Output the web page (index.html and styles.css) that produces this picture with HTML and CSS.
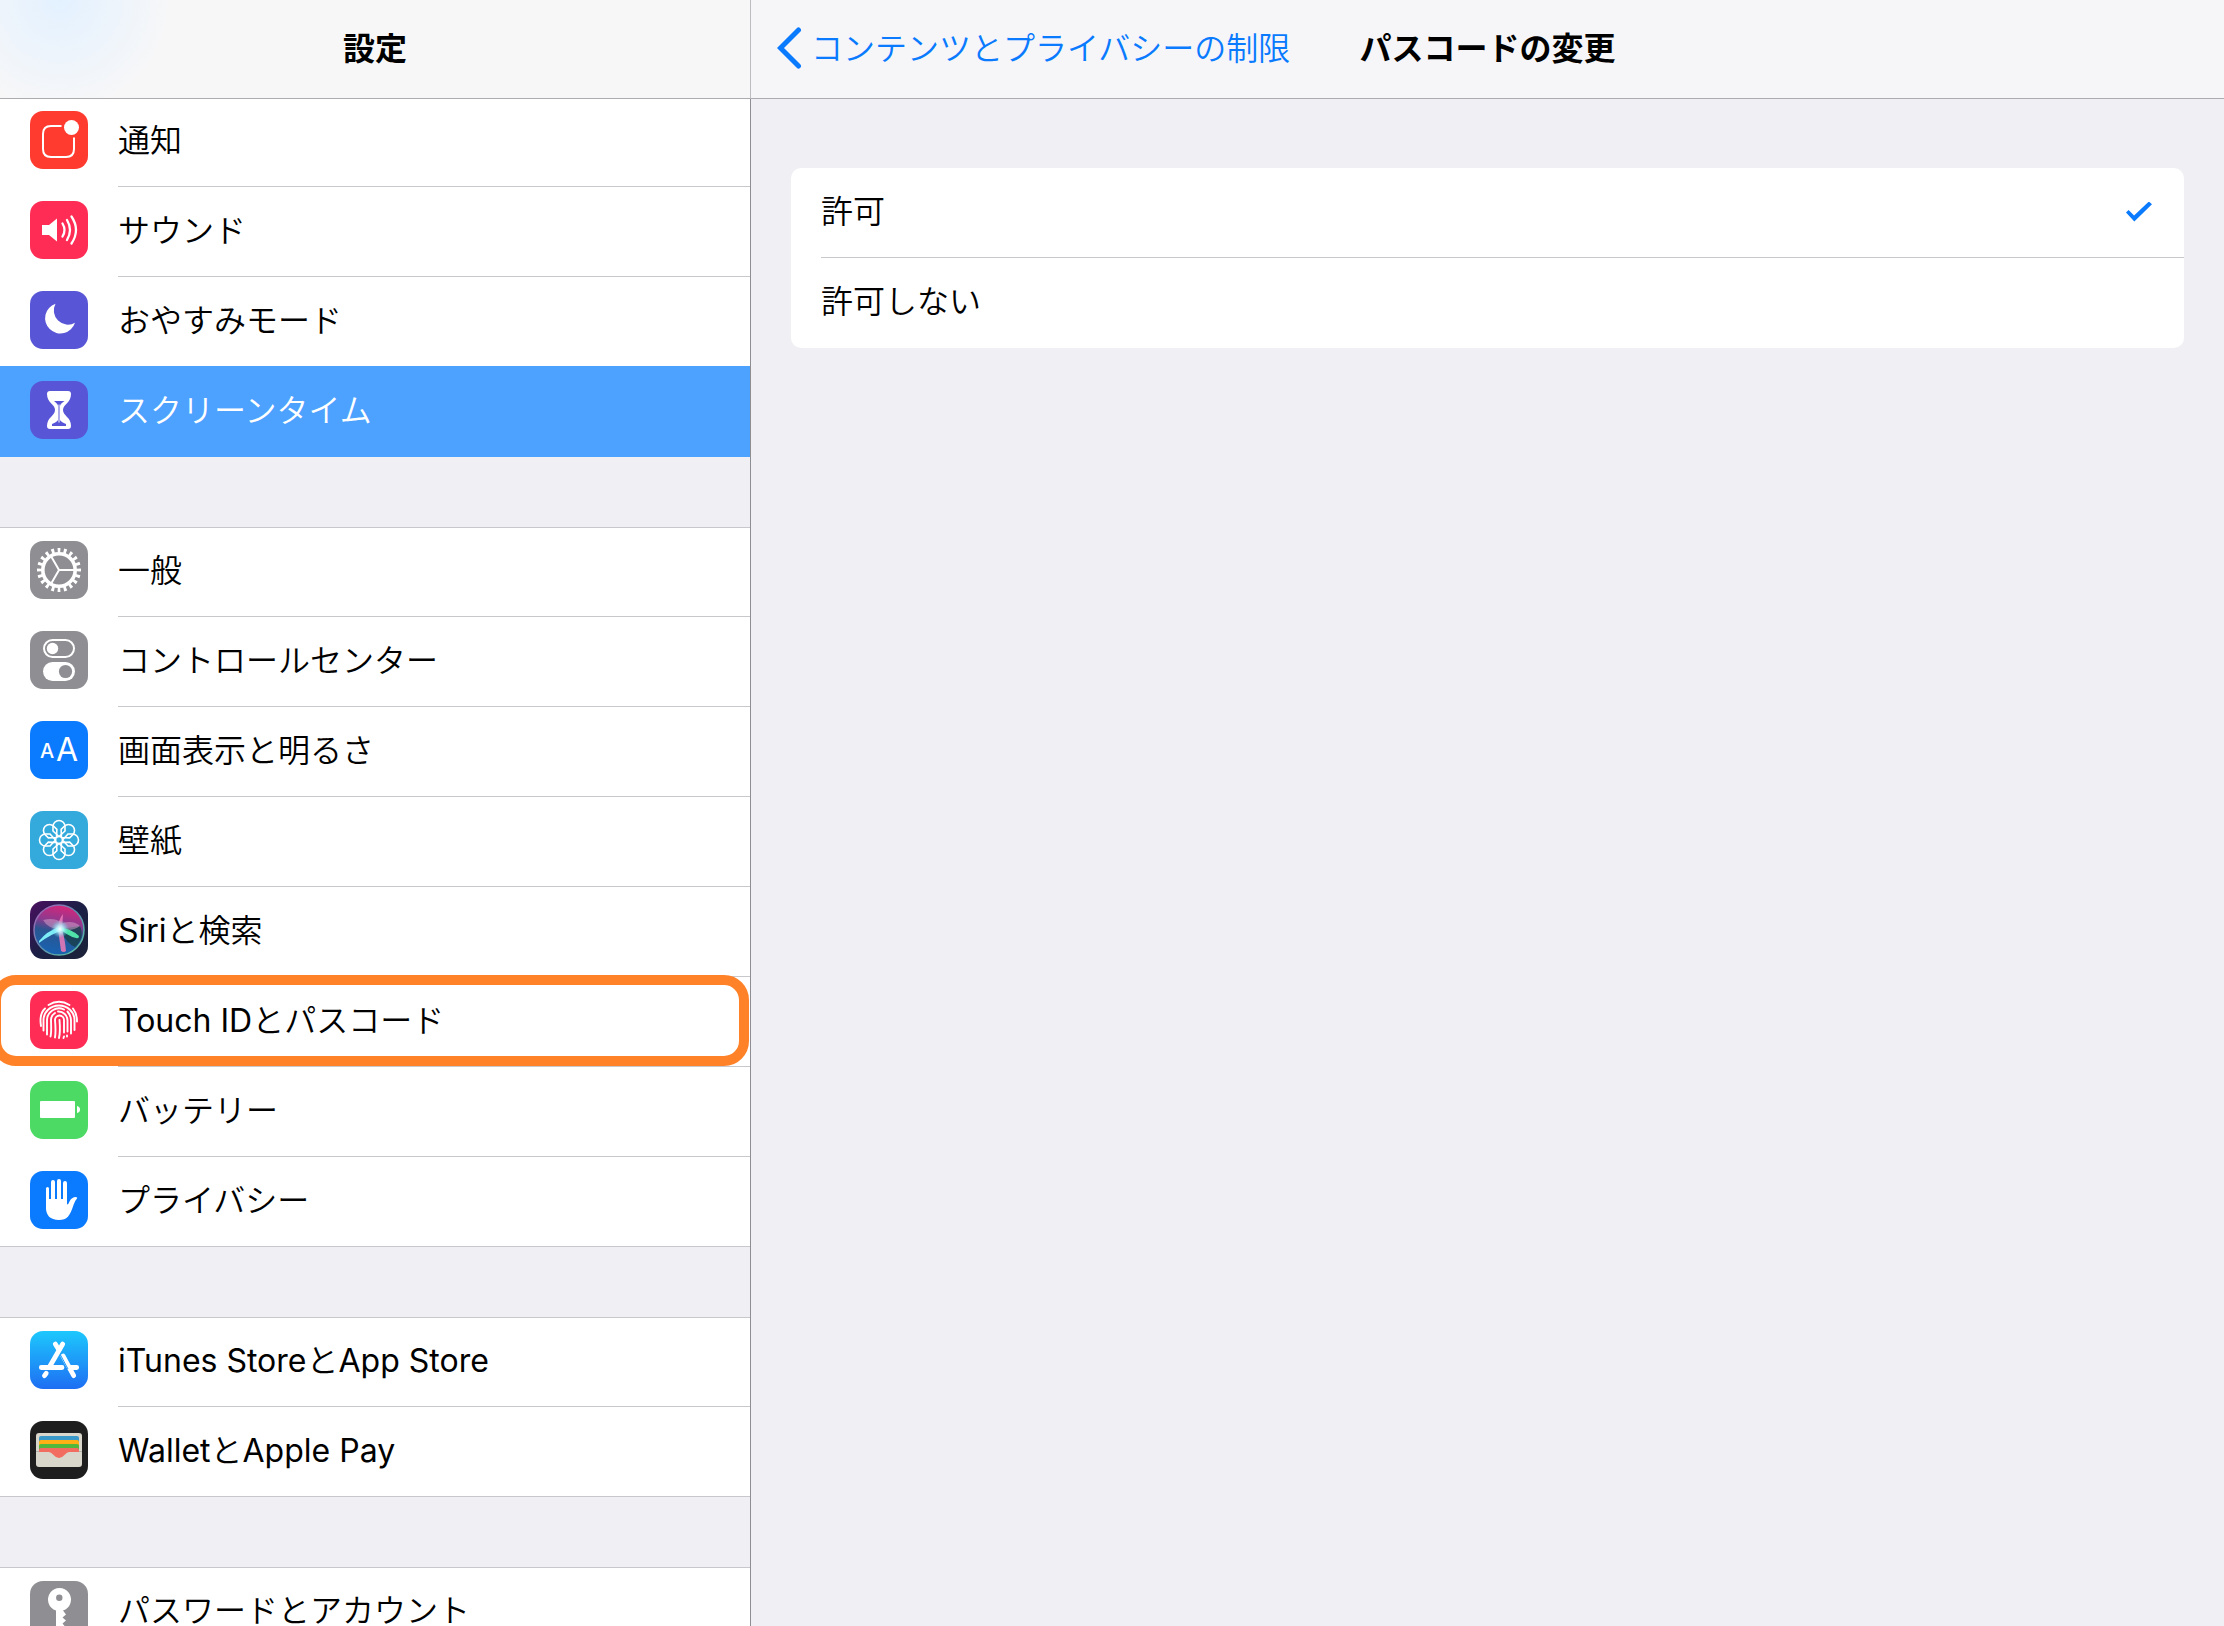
FILE: index.html
```
<!DOCTYPE html>
<html lang="ja">
<head>
    <meta charset="UTF-8">
    <meta name="viewport" content="width=device-width, initial-scale=1.0">
    <title>設定</title>
    <link rel="stylesheet" href="styles.css">
</head>
<body>

<div class="settings">
    <aside class="sidebar">
        <header class="bar sidebar-bar">
            <h1>設定</h1>
        </header>

        <nav class="menu">
            <ul class="group">
                <li><a class="item" href="#notifications">
                    <svg class="icon red" viewBox="0 0 58 58" aria-hidden="true">
                        <path d="M31.5 15H21q-8 0-8 8v15q0 8 8 8h15q8 0 8-8V26.500" fill="none" stroke="#fff" stroke-width="2"/>
                        <circle cx="41.500" cy="16.500" r="7.500" fill="#fff"/>
                    </svg>
                    <span class="label">通知</span>
                </a></li>
                <li><a class="item" href="#sound">
                    <svg class="icon pink" viewBox="0 0 58 58" aria-hidden="true">
                        <path d="M12 24h7l8-6.500v23L19 34h-7z" fill="#fff"/>
                        <g fill="none" stroke="#fff" stroke-width="2.300" stroke-linecap="round">
                            <path d="M32.500 22.500q4 6.500 0 13"/>
                            <path d="M37 19q6 10 0 20"/>
                            <path d="M41.500 15.500q9 13.500 0 27"/>
                        </g>
                    </svg>
                    <span class="label">サウンド</span>
                </a></li>
                <li><a class="item" href="#dnd">
                    <svg class="icon purple" viewBox="0 0 58 58" aria-hidden="true">
                        <path d="M25.500 12.700A15.300 15.300 0 1 0 45 31.800A14.200 14.200 0 0 1 25.500 12.700z" fill="#fff"/>
                    </svg>
                    <span class="label">おやすみモード</span>
                </a></li>
                <li><a class="item selected" href="#screentime" aria-current="page">
                    <svg class="icon purple" viewBox="0 0 58 58" aria-hidden="true">
                        <path d="M20 10h18q3 0 3 3c0 9-8 10-8 16s8 7 8 16q0 3-3 3H20q-3 0-3-3c0-9 8-10 8-16s-8-7-8-16q0-3 3-3z" fill="#fff"/>
                        <path d="M24 20h10.500q-4.500 3-4.500 5v14q1 2 6 4v2H22v-2q5-2 6-4V25q0-2-4-5z" fill="#5856d6"/>
                        <path d="M29 23.500v18" stroke="#fff" stroke-width="1"/>
                    </svg>
                    <span class="label">スクリーンタイム</span>
                </a></li>
            </ul>

            <ul class="group">
                <li><a class="item" href="#general">
                    <svg class="icon gray" viewBox="0 0 58 58" aria-hidden="true">
                        <g fill="none" stroke="#fff">
                            <circle cx="29" cy="29" r="16.200" stroke-width="3.600"/>
                            <circle cx="29" cy="29" r="19.600" stroke-width="4.800" pathLength="40" stroke-dasharray="0.9 1.1" stroke-dashoffset="0.45"/>
                            <path d="M29 29h15M29 29l-7.500-13M29 29l-7.500 13" stroke-width="2"/>
                        </g>
                    </svg>
                    <span class="label">一般</span>
                </a></li>
                <li><a class="item" href="#control-center">
                    <svg class="icon gray" viewBox="0 0 58 58" aria-hidden="true">
                        <rect x="14" y="9" width="30" height="17" rx="8.500" fill="none" stroke="#fff" stroke-width="2"/>
                        <circle cx="22.500" cy="17.500" r="5.700" fill="#fff"/>
                        <rect x="13" y="31" width="32" height="19" rx="9.500" fill="#fff"/>
                        <circle cx="35.500" cy="40.500" r="6.600" fill="#8e8e93"/>
                    </svg>
                    <span class="label">コントロールセンター</span>
                </a></li>
                <li><a class="item" href="#display">
                    <svg class="icon blue" viewBox="0 0 58 58" aria-hidden="true">
                        <text x="10" y="37" class="glyph-small">A</text>
                        <text x="26" y="40" class="glyph-large">A</text>
                    </svg>
                    <span class="label">画面表示と明るさ</span>
                </a></li>
                <li><a class="item" href="#wallpaper">
                    <svg class="icon sky" viewBox="0 0 58 58" aria-hidden="true">
                        <defs>
                            <path id="petal" d="M29 25.500L23 20v-4.500a6 6 0 0 1 12 0V20z"/>
                        </defs>
                        <g fill="none" stroke="#fff" stroke-width="1.600">
                            <use href="#petal"/>
                            <use href="#petal" transform="rotate(45 29 29)"/>
                            <use href="#petal" transform="rotate(90 29 29)"/>
                            <use href="#petal" transform="rotate(135 29 29)"/>
                            <use href="#petal" transform="rotate(180 29 29)"/>
                            <use href="#petal" transform="rotate(225 29 29)"/>
                            <use href="#petal" transform="rotate(270 29 29)"/>
                            <use href="#petal" transform="rotate(315 29 29)"/>
                            <circle cx="29" cy="29" r="3.500"/>
                        </g>
                    </svg>
                    <span class="label">壁紙</span>
                </a></li>
                <li><a class="item" href="#siri">
                    <svg class="icon" viewBox="0 0 58 58" aria-hidden="true">
                        <defs>
                            <linearGradient id="siri-bg" x1="0" y1="0" x2="1" y2="1">
                                <stop offset="0" stop-color="#4a1060"/>
                                <stop offset="0.5" stop-color="#1c1f45"/>
                                <stop offset="1" stop-color="#1b2338"/>
                            </linearGradient>
                            <linearGradient id="siri-orb" x1="0.6" y1="0" x2="0.4" y2="1">
                                <stop offset="0" stop-color="#d8267a"/>
                                <stop offset="0.35" stop-color="#8b3a8f"/>
                                <stop offset="0.55" stop-color="#2a5590"/>
                                <stop offset="1" stop-color="#1763b4"/>
                            </linearGradient>
                            <linearGradient id="siri-ring" x1="0" y1="0" x2="1" y2="1">
                                <stop offset="0" stop-color="#b05ab8"/>
                                <stop offset="0.5" stop-color="#5d8fb0"/>
                                <stop offset="1" stop-color="#59c9a4"/>
                            </linearGradient>
                            <radialGradient id="siri-glow">
                                <stop offset="0" stop-color="#fff"/>
                                <stop offset="0.4" stop-color="#b8f6ff" stop-opacity="0.8"/>
                                <stop offset="1" stop-color="#5ed2ee" stop-opacity="0"/>
                            </radialGradient>
                        </defs>
                        <rect width="58" height="58" fill="url(#siri-bg)"/>
                        <circle cx="29" cy="29" r="25" fill="url(#siri-orb)" stroke="url(#siri-ring)" stroke-width="1.500"/>
                        <path d="M30 28l20-3q5 12-5 21-8-3-15-18z" fill="#173f4a" opacity="0.8"/>
                        <path d="M13 19q12-3 19 3 12-3 18 3-8 6-20 3-12 0-17-9z" fill="#d9a5cc" opacity="0.5"/>
                        <path d="M33 13q-5 6-5 15l3 22q3 2 5 0-1-12-4-21z" fill="#f07ab8" opacity="0.85"/>
                        <path d="M9 40q8-10 20-14l4 3q-12 4-24 13z" fill="#7cecf7"/>
                        <path d="M28 26q14 2 21 9 0 3-3 2-9-2-18-11z" fill="#4fe3a9"/>
                        <circle cx="30" cy="28" r="9" fill="url(#siri-glow)"/>
                    </svg>
                    <span class="label"><span class="latin">Siri</span>と検索</span>
                </a></li>
                <li><a class="item highlight" href="#touchid">
                    <svg class="icon pink" viewBox="0 0 58 58" aria-hidden="true">
                        <g fill="none" stroke="#fff" stroke-width="1.900" stroke-linecap="round">
                            <path d="M18.500 14Q29 7.500 39.500 14"/>
                            <path d="M11 35Q9 23 15 17.500"/>
                            <path d="M43 17.500q4 5 4 13"/>
                            <path d="M13.500 39.500V29a15.500 14.500 0 0 1 31 0v10"/>
                            <path d="M17 43.500V29a12 12 0 0 1 17-10.500M37.500 20.500q3.500 4 3.500 9v13"/>
                            <path d="M20.500 45.500q1-3 .500-16.500a8.500 8.500 0 0 1 4-7M28 20.500a9 9 0 0 1 9.500 9v11M37 44.500v1"/>
                            <path d="M25 46.500q1-6 0-17.500a4.500 4.500 0 0 1 9 0v12.500M34 45.500l-.500 1.500"/>
                            <path d="M29.500 29q1 12-.500 18"/>
                        </g>
                    </svg>
                    <span class="label"><span class="latin">Touch ID</span>とパスコード</span>
                </a></li>
                <li><a class="item" href="#battery">
                    <svg class="icon green" viewBox="0 0 58 58" aria-hidden="true">
                        <rect x="10" y="20" width="35" height="17" rx="1" fill="#fff"/>
                        <path d="M47 25q3 .500 3 3.500t-3 3.500z" fill="#fff"/>
                    </svg>
                    <span class="label">バッテリー</span>
                </a></li>
                <li><a class="item" href="#privacy">
                    <svg class="icon blue" viewBox="0 0 58 58" aria-hidden="true">
                        <path d="M23 11v20M29 10v20M35 12v20" stroke="#fff" stroke-width="4" stroke-linecap="round"/>
                        <path d="M17.500 17.500v20" stroke="#fff" stroke-width="3" stroke-linecap="round"/>
                        <path d="M16 28h21v5.500q1.500 0 2.500-3 2-4.500 6.500-4.500 2 .500 1 1.500-2 2-3.500 6.500C40 45 37 49 29 49c-9 0-13-5-13-12z" fill="#fff"/>
                    </svg>
                    <span class="label">プライバシー</span>
                </a></li>
            </ul>

            <ul class="group">
                <li><a class="item" href="#store">
                    <svg class="icon" viewBox="0 0 58 58" aria-hidden="true">
                        <defs>
                            <linearGradient id="store-bg" x1="0" y1="0" x2="0" y2="1">
                                <stop offset="0" stop-color="#1dc8fd"/>
                                <stop offset="1" stop-color="#1e6ef3"/>
                            </linearGradient>
                        </defs>
                        <rect width="58" height="58" fill="url(#store-bg)"/>
                        <g fill="none" stroke="#fff" stroke-width="4.800" stroke-linecap="round">
                            <path d="M32.700 13L20 35M16.200 42.300l-1.700 2.400"/>
                            <path d="M25.300 13l3.700 6M33 25l10.700 19.700"/>
                            <path d="M11.300 36.500H32M41 36.500h5.700"/>
                        </g>
                        <path d="M30.500 24l7.500 14" stroke="#1f98f9" stroke-width="1"/>
                    </svg>
                    <span class="label"><span class="latin">iTunes Store</span>と<span class="latin">App Store</span></span>
                </a></li>
                <li><a class="item" href="#wallet">
                    <svg class="icon black" viewBox="0 0 58 58" aria-hidden="true">
                        <rect x="6" y="12" width="46" height="34" rx="3" fill="#d9d7cb"/>
                        <path d="M9 31V17q0-2 2-2h36q2 0 2 2v14z" fill="#3b99c9"/>
                        <path d="M9 31V21q0-2 2-2h36q2 0 2 2v10z" fill="#ffb014"/>
                        <path d="M9 31v-6q0-2 2-2h36q2 0 2 2v6z" fill="#51b83b"/>
                        <path d="M9 31v-2q0-2 2-2h36q2 0 2 2v2H39q-2 0-4 2.500-3 3.500-6 3.500t-6-3.500Q21 31 19 31z" fill="#f26d5f"/>
                        <path d="M6 30.500h3M49 30.500h3" stroke="#b5b3a8"/>
                    </svg>
                    <span class="label"><span class="latin">Wallet</span>と<span class="latin">Apple Pay</span></span>
                </a></li>
            </ul>

            <ul class="group">
                <li><a class="item" href="#accounts">
                    <svg class="icon gray" viewBox="0 0 58 58" aria-hidden="true">
                        <path d="M26 29.500a11.500 11.500 0 1 1 7 0l3 4-3.500 3 3.500 3-3.500 3 2.500 3-5.500 5.500-3.500-3.500z" fill="#fff"/>
                        <circle cx="29.300" cy="16.700" r="3.200" fill="#8e8e93"/>
                    </svg>
                    <span class="label">パスワードとアカウント</span>
                </a></li>
            </ul>
        </nav>
    </aside>

    <main class="detail">
        <header class="bar detail-bar">
            <a class="back" href="#restrictions">
                <svg class="chevron" viewBox="0 0 26 42" aria-hidden="true">
                    <path d="M21.500 3L3.500 21l18 18" fill="none" stroke="currentColor" stroke-width="5" stroke-linecap="round"/>
                </svg>
                <span>コンテンツとプライバシーの制限</span>
            </a>
            <h2>パスコードの変更</h2>
        </header>

        <form class="options">
            <label class="option">
                <span>許可</span>
                <input type="radio" name="passcode" value="allow" checked>
            </label>
            <label class="option">
                <span>許可しない</span>
                <input type="radio" name="passcode" value="deny">
            </label>
        </form>
    </main>
</div>

</body>
</html>
```

FILE: styles.css
```
* {
    box-sizing: border-box;
}

body {
    margin: 0;
    font-family: "Noto Sans CJK JP", sans-serif;
    font-size: 32px;
    font-weight: 350;
    line-height: 48px;
    color: #000;
    background-color: #efeff4;
}

a {
    color: inherit;
    text-decoration: none;
}

h1, h2 {
    margin: 0;
    font-size: 32px;
    line-height: 48px;
    font-weight: 700;
}

.settings {
    display: grid;
    grid-template-columns: minmax(320px, 751px) 1fr;
    height: 100vh;
    overflow: hidden;
}

/* Top bars */
.bar {
    min-height: 99px;
    padding-bottom: 6px;
    background-color: #f7f7f8;
    border-bottom: 1px solid #acacb0;
}

.sidebar-bar {
    display: flex;
    align-items: center;
    justify-content: center;
    position: relative;
    z-index: 2;
    border-right: 1px solid #bcbcc1;
    background-image: radial-gradient(circle at 60px 0, #e3f1ff, #f7f7f8 110px);
}

.detail-bar {
    display: grid;
    grid-template-columns: 1fr auto 1fr;
    align-items: center;
    background-color: #f6f6f8;
}

.back {
    display: flex;
    align-items: center;
    gap: 8px;
    padding-left: 26px;
    color: #0a7aff;
    white-space: nowrap;
}

.chevron {
    width: 26px;
    height: 42px;
    margin-top: 4px;
}

/* Sidebar */
.sidebar {
    display: flex;
    flex-direction: column;
    min-height: 0;
}

.menu {
    flex: 1;
    min-height: 0;
    margin-top: -2px; /* list is scrolled under the bar */
    overflow: hidden;
    border-right: 1px solid #8e8e93;
}

.group {
    list-style: none;
    margin: 0 0 70px;
    padding: 0;
    background-color: #fff;
    box-shadow: inset 0 1px #c8c7cc, inset 0 -1px #c8c7cc;
}

.item {
    display: flex;
    align-items: flex-start;
    gap: 30px;
    padding-left: 30px;
    position: relative;
}

.label {
    flex: 1;
    padding: 17px 0 24px;
    border-bottom: 1px solid #c8c7cc;
}

.group li:last-child .label {
    border-bottom-color: transparent;
}

.latin {
    font-family: Inter, sans-serif;
    font-weight: 400;
    line-height: 32px;
}

.selected {
    color: #fff;
    background-color: #4da1ff;
    box-shadow: 0 -1px #4da1ff;
}

/* Orange frame around the row */
.highlight::after {
    content: "";
    position: absolute;
    top: -2px;
    right: 1px;
    bottom: 1px;
    left: -9px;
    z-index: 1;
    border: 10px solid #ff8228;
    border-radius: 25px;
}

/* Icons */
.icon {
    flex: none;
    width: 58px;
    height: 58px;
    margin-top: 14px;
    border-radius: 13px;
}

.red { background-color: #ff3b30; }
.pink { background-color: #ff2d55; }
.purple { background-color: #5856d6; }
.gray { background-color: #8e8e93; }
.blue { background-color: #0a7aff; }
.sky { background-color: #34aadc; }
.green { background-color: #4cd964; }
.black { background-color: #1e1e1e; }

.glyph-small,
.glyph-large {
    font-family: Inter, sans-serif;
    fill: #fff;
}

.glyph-small {
    font-size: 20px;
    font-weight: 500;
}

.glyph-large {
    font-size: 32px;
    font-weight: 400;
}

/* Right pane */
.options {
    margin: 69px 40px;
    background-color: #fff;
    border-radius: 10px;
}

.option {
    display: flex;
    align-items: center;
    justify-content: space-between;
    margin-left: 30px;
    padding: 17px 32px 24px 0;
    border-bottom: 1px solid #c8c7cc;
}

.option:last-child {
    border-bottom-color: transparent;
}

.option input {
    appearance: none;
    width: 26px;
    height: 20px;
    margin: 5px 0 0;
}

.option input:checked {
    background-color: #0a7aff;
    clip-path: polygon(0 55%, 10% 42%, 31% 70%, 88% 0, 100% 14%, 32% 100%);
}
```
